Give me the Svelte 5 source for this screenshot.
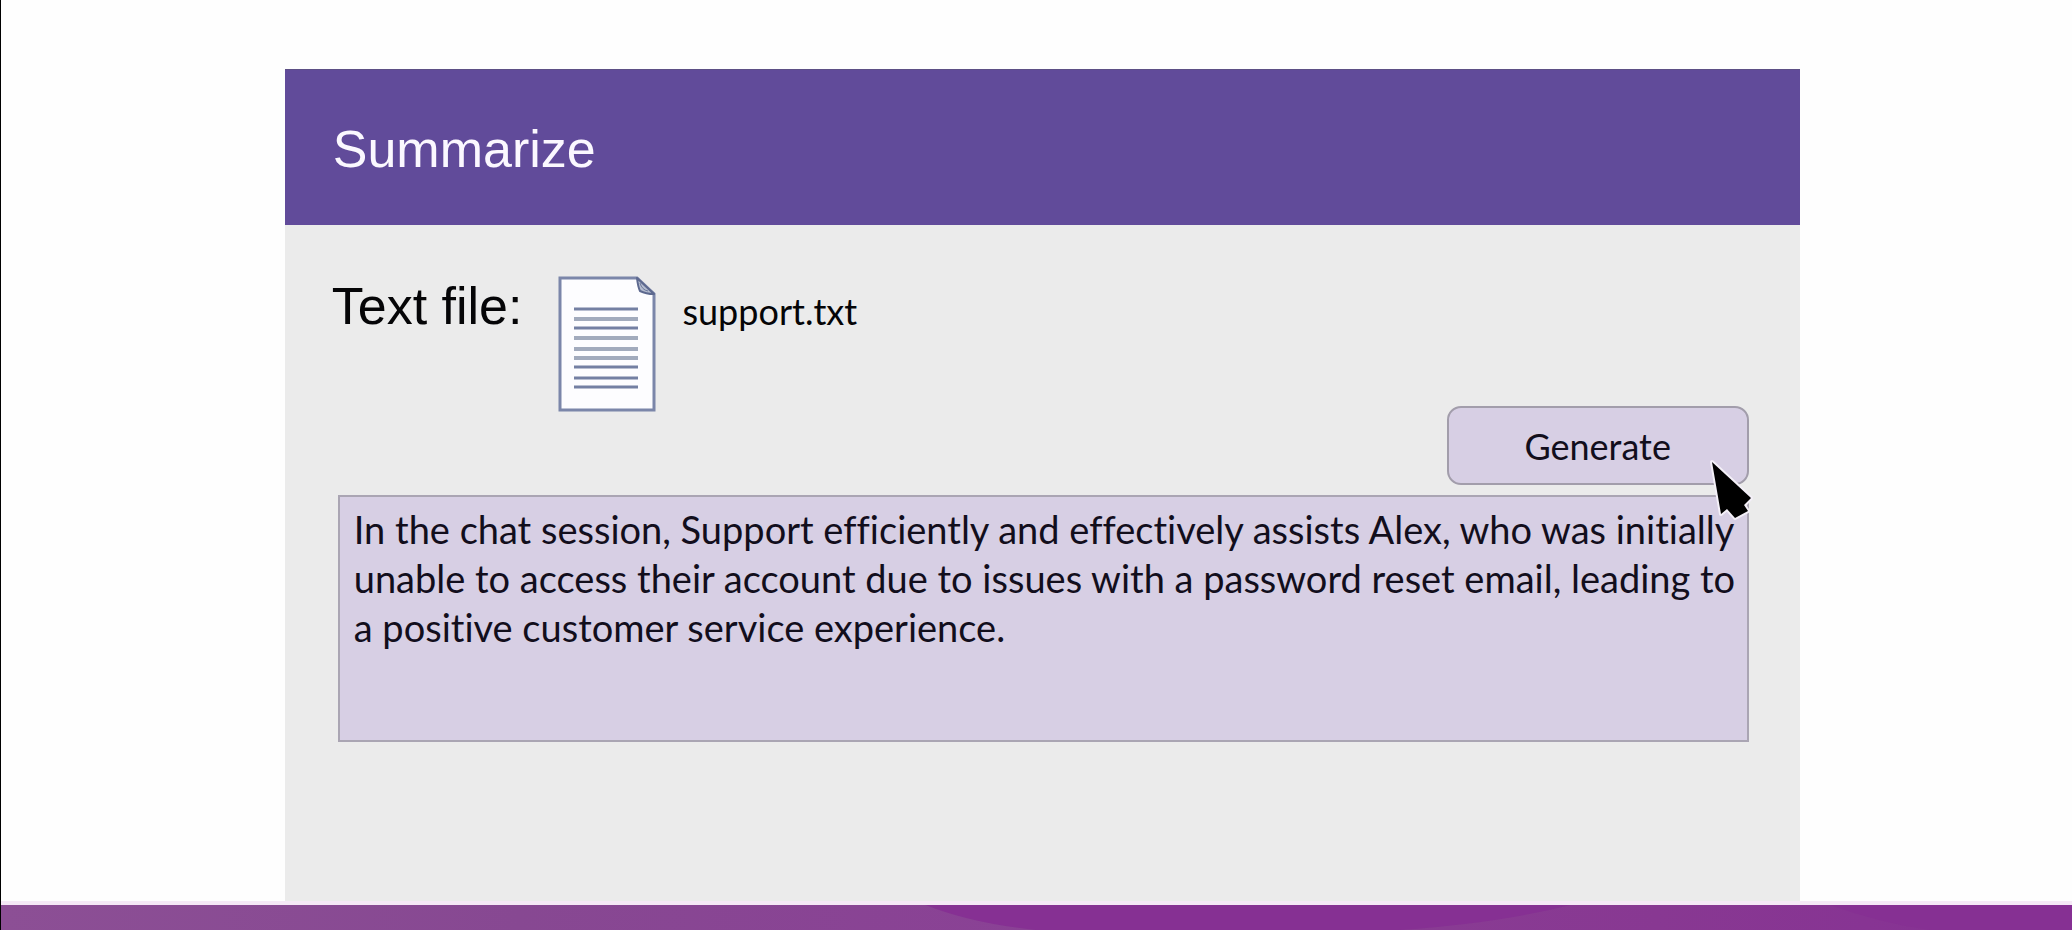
<script>
  let summary = $state(
    'In the chat session, Support efficiently and effectively assists Alex, who was initially unable to access their account due to issues with a password reset email, leading to a positive customer service experience.'
  );
  const rules = [
    { y: 33, soft: false },
    { y: 43, soft: true },
    { y: 52, soft: false },
    { y: 62, soft: true },
    { y: 73, soft: true },
    { y: 82, soft: true },
    { y: 91, soft: false },
    { y: 102, soft: false },
    { y: 111, soft: false }
  ];
</script>

<div class="page">
  <main class="card">
    <header class="title-bar"><h1>Summarize</h1></header>
    <form class="body" onsubmit={(e) => e.preventDefault()}>
      <div class="controls">
        <div class="file">
          <span class="label">Text file:</span>
          <svg class="doc" viewBox="0 0 98 137" aria-hidden="true">
            <path d="M2 2H79L96 18V134H2Z" fill="#fdfdff" stroke="#7b86a9" stroke-width="3" />
            <path d="M79 2Q80 11 82 15Q88 18 96 18Z" fill="#b4bccf" stroke="#5d698f" stroke-width="2" stroke-linejoin="round" />
            <path d="M82 7Q84 14 90 15" fill="none" stroke="#6c789b" stroke-width="1" />
            {#each rules as r}
              <line x1="16" x2="80" y1={r.y} y2={r.y} stroke={r.soft ? '#a2abbd' : '#7480a3'} stroke-width={r.soft ? 4 : 3} />
            {/each}
          </svg>
          <span class="name">support.txt</span>
        </div>
        <button type="submit" class="generate">
          Generate
          <svg class="pointer" viewBox="0 0 46 66" aria-hidden="true">
            <path d="M4 5L13 57L19 52L27 61L40 54L36 48L43 41Z" fill="none" stroke="#f4f0f8" stroke-width="4" stroke-linejoin="round" />
            <path d="M4 5L13 57L19 52L27 61L40 54L36 48L43 41Z" fill="#000" />
          </svg>
        </button>
      </div>
      <textarea class="summary" aria-label="Summary" readonly bind:value={summary}></textarea>
    </form>
  </main>
  <footer class="strip">
    <svg viewBox="0 0 2072 25" preserveAspectRatio="none" aria-hidden="true">
      <defs>
        <linearGradient id="base">
          <stop offset="0" stop-color="#8c4f95" />
          <stop offset="0.25" stop-color="#874892" />
          <stop offset="0.5" stop-color="#8a4195" />
          <stop offset="0.8" stop-color="#883892" />
          <stop offset="1" stop-color="#863094" />
        </linearGradient>
      </defs>
      <rect width="2072" height="25" fill="url(#base)" />
      <path d="M925 0Q970 18 1035 25H1400Q1500 18 1570 0Z" fill="#863093" />
      <path d="M1830 0Q1880 18 1930 25H2072V0Z" fill="#863093" />
    </svg>
  </footer>
</div>

<style>
  :global(body) {
    margin: 0;
    background: #fefefe;
  }
  .page {
    box-sizing: border-box;
    min-height: 100vh;
    display: flex;
    flex-direction: column;
    border-left: 1px solid #000;
    color: #050507;
    font-family: Lato, "Liberation Sans", sans-serif;
    font-size: 36px;
  }
  .card {
    flex: 1;
    display: flex;
    flex-direction: column;
    margin: 69px 13.15% 0 13.7%;
    background: #ebebeb;
  }
  .title-bar {
    box-sizing: border-box;
    min-height: 156px;
    display: flex;
    align-items: center;
    padding: 2px 48px 0;
    background: #614b9a;
    border-top: 1px solid #5c4f85;
  }
  h1,
  .label {
    margin: 0;
    font-family: "Liberation Sans", Arial, sans-serif;
    font-size: 52px;
    line-height: 60px;
    font-weight: 400;
  }
  h1 {
    color: #fbf8ff;
  }
  .body {
    display: flex;
    flex-direction: column;
    gap: 10px;
    padding: 51px 51px 40px 53px;
  }
  .controls {
    display: flex;
    justify-content: space-between;
    min-height: 209px;
  }
  .file {
    display: flex;
    align-items: flex-start;
    margin-left: -6px;
  }
  .doc {
    width: 98px;
    height: 137px;
    margin: 0 26px 0 36px;
  }
  .name {
    line-height: 70px;
  }
  .generate {
    position: relative;
    align-self: flex-end;
    width: 302px;
    height: 79px;
    padding: 0;
    border: 2px solid #a29dab;
    border-radius: 14px;
    background: #d7cfe4;
    color: #120e1c;
    font: inherit;
  }
  .pointer {
    position: absolute;
    right: -7px;
    bottom: -40px;
    width: 46px;
    height: 66px;
    z-index: 1;
  }
  .summary {
    box-sizing: border-box;
    width: 100%;
    height: 247px;
    padding: 8px 4px 8px 14px;
    border: 2px solid #aaa5b3;
    border-radius: 0;
    background: #d7cfe4;
    color: #120e1c;
    font: inherit;
    font-size: 38px;
    line-height: 49px;
    font-variant-ligatures: none;
    resize: none;
    outline: none;
    overflow: hidden;
  }
  .strip {
    height: 25px;
    border-top: 4px solid #f5e8f6;
  }
  .strip svg {
    display: block;
    width: 100%;
    height: 25px;
  }
</style>
